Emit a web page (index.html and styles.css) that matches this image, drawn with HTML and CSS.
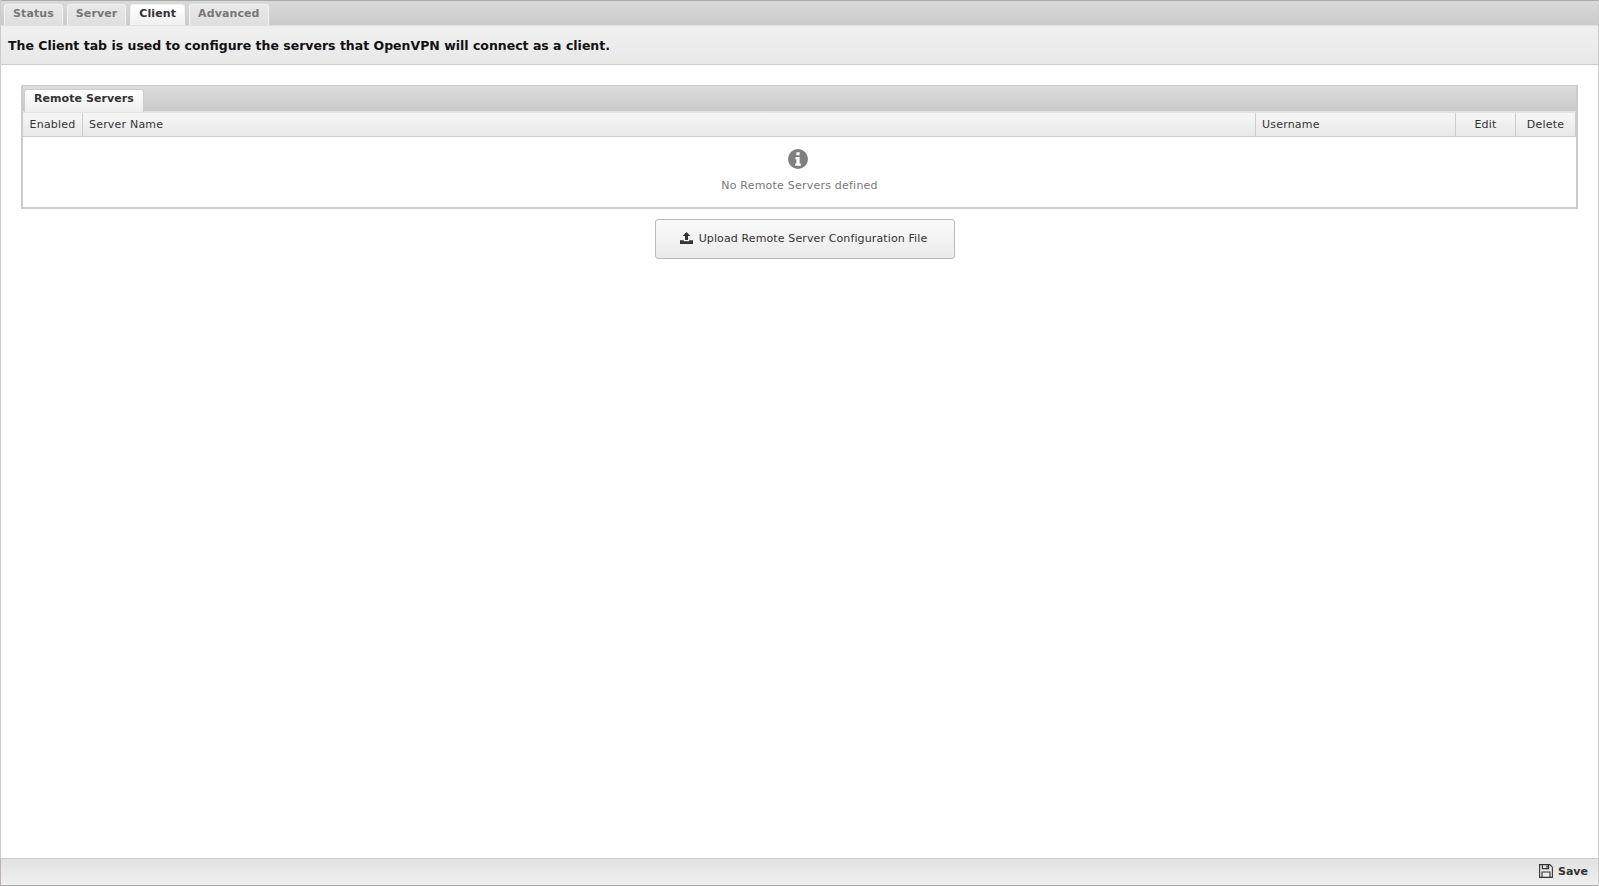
FILE: index.html
```html
<!DOCTYPE html>
<html lang="en">
<head>
    <meta charset="UTF-8">
    <title>OpenVPN - Client</title>
    <link rel="stylesheet" href="styles.css">
</head>
<body>
<div class="app">
    <div class="top-tabs">
        <a class="tab">Status</a>
        <a class="tab">Server</a>
        <a class="tab active">Client</a>
        <a class="tab">Advanced</a>
    </div>
    <div class="desc">The Client tab is used to configure the servers that OpenVPN will connect as a client.</div>

    <div class="content">
        <div class="panel">
            <div class="panel-tabs">
                <a class="panel-tab">Remote Servers</a>
            </div>
            <div class="grid">
                <div class="grid-head">
                    <div class="col col-enabled">Enabled</div>
                    <div class="col col-name">Server Name</div>
                    <div class="col col-user">Username</div>
                    <div class="col col-edit">Edit</div>
                    <div class="col col-delete">Delete</div>
                </div>
                <div class="empty">
                    <svg class="empty-icon" viewBox="0 0 20 20" width="20" height="20">
                        <path fill="#7f7f7f" fill-rule="evenodd" d="M10 0a10 10 0 1 0 0 20a10 10 0 0 0 0-20zM8.4 3.2h3.2v3h-3.2zM7.4 8h4.2v6.6h1.2v2.2H7.2v-2.2h1.2v-4.4h-1z"/>
                    </svg>
                    <div class="empty-text">No Remote Servers defined</div>
                </div>
            </div>
        </div>

        <button class="upload-btn" type="button">
            <svg viewBox="0 0 13 12" width="13" height="12">
                <path fill="#333" d="M6.5 0L10.4 4H8v4H5V4H2.6z"/>
                <path fill="#333" d="M0 8.2h3.8v1h5.4v-1H13V12H0z"/>
            </svg>
            <span>Upload Remote Server Configuration File</span>
        </button>
    </div>

    <div class="footer">
        <a class="save">
            <svg viewBox="0 0 14 14" width="14" height="14">
                <path fill="none" stroke="#333" stroke-width="1.1" d="M.6.6h10.2l2.6 2.6v10.2H.6z"/>
                <path fill="none" stroke="#333" stroke-width="1.1" d="M3.4.8v3.8h6.2V.8M3 13.2V8h8v5.2"/>
                <path fill="#333" d="M7.4 1.4h1.4v2.4H7.4z"/>
            </svg>
            <span>Save</span>
        </a>
    </div>
</div>
</body>
</html>
```

FILE: styles.css
```css
html, body {
    height: 100%;
}
body {
    margin: 0;
    background-color: #fff;
    font-family: "DejaVu Sans", Verdana, sans-serif;
    font-size: 11px;
    color: #333;
}
.app {
    display: flex;
    flex-direction: column;
    height: 100vh;
    box-sizing: border-box;
    border-left: 1px solid #ccc;
    border-right: 1px solid #ccc;
}

/* top tabs */
.top-tabs {
    display: flex;
    gap: 4px;
    height: 25px;
    box-sizing: border-box;
    padding: 3px 0 0 3px;
    background: linear-gradient(#d9d9d9, #cbcbcb);
    border-top: 1px solid #aaa;
    flex-shrink: 0;
}
.tab {
    padding: 0 8px;
    height: 21px;
    line-height: 18px;
    font-weight: bold;
    letter-spacing: 0.1px;
    color: #777;
    background: linear-gradient(#e8e8e8, #dedede);
    border: 1px solid #f2f2f2;
    border-bottom: none;
    border-radius: 3px 3px 0 0;
}
.tab.active {
    color: #333;
    background: linear-gradient(#fff, #eee);
}
.desc {
    height: 40px;
    box-sizing: border-box;
    padding: 0 7px;
    line-height: 39px;
    font-size: 12.5px;
    font-weight: bold;
    color: #111;
    background: linear-gradient(#f0f0f0, #e8e8e8);
    border-top: 1px solid #e0e0e0;
    border-bottom: 1px solid #ccc;
    flex-shrink: 0;
}

/* main area */
.content {
    flex: 1;
    display: flex;
    flex-direction: column;
    padding: 20px 20px 0;
}
.panel {
    border: 2px solid #ccc;
    border-top: none;
    border-top-left-radius: 2px;
}
.panel-tabs {
    height: 26px;
    box-sizing: border-box;
    margin: 0 -1px;
    padding: 3px 0 0 1px;
    background: linear-gradient(#dcdcdc, #c9c9c9);
    border: 1px solid #ccc;
    border-bottom: none;
}
.panel-tab {
    display: inline-block;
    height: 23px;
    box-sizing: border-box;
    padding: 0 9px;
    line-height: 17px;
    font-weight: bold;
    letter-spacing: 0.06px;
    color: #333;
    background: linear-gradient(#fff, #eee);
    border: 1px solid #ccc;
    border-bottom: none;
    border-radius: 3px 3px 0 0;
}
.grid-head {
    display: flex;
    height: 26px;
    box-sizing: border-box;
    line-height: 23px;
    letter-spacing: 0.2px;
    background: linear-gradient(#f6f6f6, #e8e8e8);
    border-top: 2px solid #e4e4e4;
    border-bottom: 1px solid #ccc;
    border-right: 1px solid #ccc;
}
.col {
    box-sizing: border-box;
    padding: 0 6px;
    border-right: 1px solid #ccc;
    white-space: nowrap;
}
.col-enabled { width: 60px; text-align: center; padding: 0; }
.col-name { flex: 1; }
.col-user { width: 200px; }
.col-edit { width: 60px; text-align: center; }
.col-delete { width: 59px; text-align: center; border-right: none; }
.empty {
    height: 70px;
    display: flex;
    flex-direction: column;
    align-items: center;
    padding-top: 12px;
    box-sizing: border-box;
}
.empty-icon {
    display: block;
    margin-left: -4px;
}
.empty-text {
    margin-top: 10px;
    color: #777;
    letter-spacing: 0.22px;
}
.upload-btn {
    display: flex;
    align-items: center;
    justify-content: center;
    gap: 6px;
    align-self: center;
    width: 300px;
    height: 40px;
    margin-top: 10px;
    margin-left: 10px;
    padding: 0 2px 2px 0;
    font-family: inherit;
    font-size: 11px;
    letter-spacing: 0.12px;
    color: #333;
    background: linear-gradient(#fafafa, #eaeaea);
    border: 1px solid #bbb;
    border-radius: 3px;
}

/* bottom bar */
.footer {
    display: flex;
    justify-content: flex-end;
    align-items: center;
    height: 28px;
    box-sizing: border-box;
    margin-left: -1px;
    padding: 0 10px 2px 0;
    background: linear-gradient(#e2e2e2, #efefef);
    border-top: 1px solid #ccc;
    border-bottom: 1px solid #aaa;
    border-left: 1px solid #bfb0b0;
    flex-shrink: 0;
}
.save {
    display: flex;
    align-items: center;
    gap: 5px;
    font-weight: bold;
}
```
